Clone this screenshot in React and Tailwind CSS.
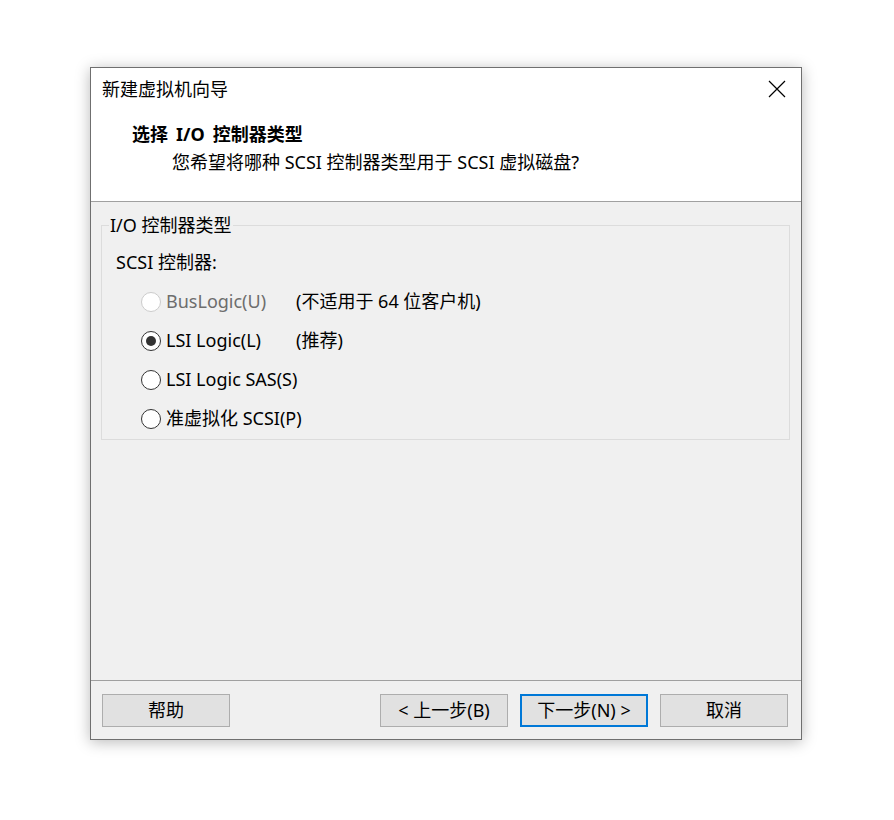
import React from "react";

const font = { fontFamily: '"Noto Sans", "Noto Sans CJK SC", sans-serif' };

function Radio({ checked, disabled }) {
  return (
    <span
      className={`flex h-[20px] w-[20px] shrink-0 items-center justify-center rounded-full border bg-white ${
        disabled ? "border-[#cccccc]" : "border-[#333333]"
      }`}
    >
      {checked && <span className="h-[10px] w-[10px] rounded-full bg-[#333333]" />}
    </span>
  );
}

function Row({ label, note, checked, disabled }) {
  return (
    <div className="flex h-[39px] items-center whitespace-nowrap pl-[39px]">
      <Radio checked={checked} disabled={disabled} />
      <span className={`ml-[5px] min-w-[130px] ${disabled ? "text-[#6d6d6d]" : "text-black"}`}>{label}</span>
      {note && <span className="text-black">{note}</span>}
    </div>
  );
}

function Btn({ children, primary }) {
  return (
    <div
      className={`flex h-[33px] w-[128px] items-center justify-center whitespace-nowrap bg-[#e1e1e1] text-black ${
        primary ? "border-2 border-[#0078d7]" : "border border-[#adadad]"
      }`}
    >
      {children}
    </div>
  );
}

export default function App() {
  return (
    <div className="min-h-[820px] w-[894px] bg-white pl-[90px] pt-[67px]" style={font}>
      <div className="flex h-[673px] w-[712px] flex-col border border-[#6f6f6f] bg-white text-[18px] text-black shadow-[0_2px_14px_rgba(0,0,0,0.28)]">
        <div className="h-[133px] bg-white">
          <div className="flex h-[42px] items-center justify-between pl-[11px] pr-[15px]">
            <span className="-mt-[1px] leading-none">新建虚拟机向导</span>
            <svg width="18" height="18" viewBox="0 0 18 18" className="-mt-[1px]">
              <path d="M1 1L17 17M17 1L1 17" stroke="#000" strokeWidth="1.2" />
            </svg>
          </div>
          <div className="mt-[12px] whitespace-nowrap pl-[41px] font-bold leading-[24px]">
            选择<span className="px-[8px]">I/O</span>控制器类型
          </div>
          <div className="mt-[4px] whitespace-nowrap pl-[81px] leading-[24px]">您希望将哪种 SCSI 控制器类型用于 SCSI 虚拟磁盘?</div>
        </div>
        <div className="flex-1 border-t border-[#a0a0a0] bg-[#f0f0f0] pl-[10px] pr-[11px] pt-[23px]">
          <div className="relative h-[215px] border border-[#dcdcdc]">
            <span className="absolute -top-[13px] left-[7px] bg-[#f0f0f0] px-[1px] leading-[24px]">I/O 控制器类型</span>
            <div className="pl-[14px] pt-[24px] leading-[24px]">SCSI 控制器:</div>
            <div className="mt-[8px]">
              <Row label="BusLogic(U)" note="(不适用于 64 位客户机)" disabled />
              <Row label="LSI Logic(L)" note="(推荐)" checked />
              <Row label="LSI Logic SAS(S)" />
              <Row label="准虚拟化 SCSI(P)" />
            </div>
          </div>
        </div>
        <div className="flex h-[59px] items-start border-t border-[#a0a0a0] bg-[#f0f0f0] pl-[11px] pr-[13px] pt-[13px]">
          <Btn>帮助</Btn>
          <div className="flex-1" />
          <div className="flex gap-[12px]">
            <Btn>&lt; 上一步(B)</Btn>
            <Btn primary>下一步(N) &gt;</Btn>
            <Btn>取消</Btn>
          </div>
        </div>
      </div>
    </div>
  );
}
